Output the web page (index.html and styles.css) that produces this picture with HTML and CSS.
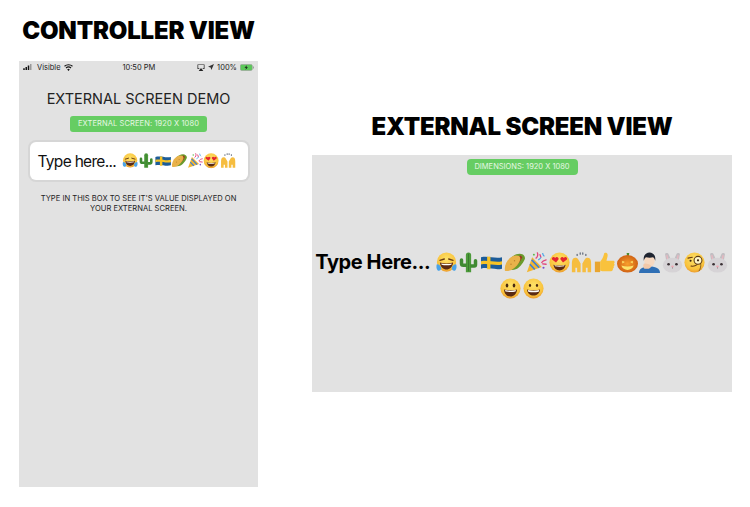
FILE: index.html
```html
<!DOCTYPE html>
<html lang="en">
<head>
<meta charset="utf-8">
<title>External screen demo</title>
<link rel="stylesheet" href="styles.css">
</head>
<body>
<svg class="defs" width="0" height="0" aria-hidden="true">
  <defs>
    <radialGradient id="face" cx="50%" cy="35%" r="70%"><stop offset="0" stop-color="#fde36a"/><stop offset=".7" stop-color="#f9c23c"/><stop offset="1" stop-color="#e8902a"/></radialGradient>
    <radialGradient id="pumpk" cx="50%" cy="50%" r="60%"><stop offset="0" stop-color="#f8a02c"/><stop offset="1" stop-color="#c8560f"/></radialGradient>
    <symbol id="joy" viewBox="0 0 24 24">
      <circle cx="12" cy="11.500" r="11" fill="url(#face)"/>
      <path d="M4.500 9.500 9.500 8M19.500 9.500 14.500 8" stroke="#6b3d12" stroke-width="1.500" fill="none" stroke-linecap="round"/>
      <path d="M4.500 12c4.500 1.500 10.500 1.500 15 0-.5 5.500-3.800 8-7.500 8S5 17.500 4.500 12z" fill="#5b2a12"/>
      <path d="M6 13c3.800 1 8.200 1 12 0l-.4 1.500c-3.300.8-7.900.8-11.200 0z" fill="#fff"/>
      <path d="M1 14c2.500 0 5 2 5 4.500S3.500 22 2 21 0 16 1 14zM23 14c-2.500 0-5 2-5 4.500s2.500 3.500 4 2.500 2-5 1-7z" fill="#4aa3e8"/>
    </symbol>
    <symbol id="cactus" viewBox="0 0 24 24">
      <path d="M9 23V3.500a3 3 0 0 1 6 0V23z" fill="#4c9a3a"/>
      <path d="M10 17H6A4 4 0 0 1 2 13V9a2 2 0 0 1 4 0v4h4zM14 14h4v-4a2 2 0 0 1 4 0v4.500A3.500 3.500 0 0 1 18.500 18H14z" fill="#3f8a32"/>
      <path d="M12 2v20" stroke="#2f6f28" stroke-width=".8"/>
    </symbol>
    <symbol id="sweden" viewBox="0 0 24 24">
      <path d="M0 6c8-2 16 2 24 0v13c-8 2-16-2-24 0z" fill="#1c5c99"/>
      <path d="M7 5.300h3.800v14.400H7z" fill="#f7c325"/>
      <path d="M0 10.500c8-2 16 2 24 0v3.800c-8 2-16-2-24 0z" fill="#f7c325"/>
    </symbol>
    <symbol id="taco" viewBox="0 0 24 24">
      <path d="M3 19C3 10 10 2 18 2c3 0 6 2 6 5 0 1-3 8-9 12-4 2-12 2-12 0z" fill="#6a9a2c"/>
      <path d="M7 14c2-5 7-9 12-10l2 2c-2 4-5 9-10 11z" fill="#9c3a1c"/>
      <path d="M1 21C0 13 6 5 13 4c4.500-.5 6 1.500 5.500 4.500-1 4.500-5.500 9.500-10 12-2.500 1-7 2-7.500.5z" fill="#e9b24a"/>
      <circle cx="8" cy="14" r=".8" fill="#b9802a"/><circle cx="12" cy="10" r=".8" fill="#b9802a"/>
    </symbol>
    <symbol id="party" viewBox="0 0 24 24">
      <path d="M1 23 7 6l11 11z" fill="#f2b632"/>
      <path d="M4.500 14 10 20M6.500 9 15 18" stroke="#3d7fd9" stroke-width="1.900"/>
      <path d="M13 1c1 2 0 5-1.500 6M23 9c-2 .5-4 1-5 3M16 3l1 3M23 14l-4-.5" stroke="#e2447a" stroke-width="1.500" fill="none" stroke-linecap="round"/>
      <path d="M19 1c0 2 1 3 2 4M14 9c2-1 3-2 3-3" stroke="#4aa3e8" stroke-width="1.300" fill="none"/>
      <circle cx="20" cy="18" r="1.200" fill="#7a4fc9"/><circle cx="9" cy="3" r="1.100" fill="#5bb84a"/>
    </symbol>
    <symbol id="heart" viewBox="0 0 24 24">
      <circle cx="12" cy="12" r="11.500" fill="url(#face)"/>
      <path d="M8 12 3.500 8.500C2.500 6.500 5.500 4.500 7 6.800 8.500 4.500 11.500 6 11 8.300zM16 12l4.500-3.500C21.500 6.500 18.500 4.500 17 6.800 15.500 4.500 12.500 6 13 8.300z" fill="#e4252f"/>
      <path d="M5 14.500c4.500 1.300 9.500 1.300 14 0-.7 4.300-3.500 6.500-7 6.500s-6.300-2.200-7-6.500z" fill="#5b2a12"/>
      <path d="M6.300 15c3.600.8 7.800.8 11.400 0l-.4 1.300c-3.200.6-7.400.6-10.600 0z" fill="#fff"/>
    </symbol>
    <symbol id="hands" viewBox="0 0 24 24">
      <path d="M1 23V14c0-2 0-5 1.500-6.500S7 6.500 8 8l3 5v10H7v-5H5v5zM23 23V14c0-2 0-5-1.500-6.500S17 6.500 16 8l-3 5v10h4v-5h2v5z" fill="#f6bd3f"/>
      <path d="M7 2.500v1.500M10.500 1v1.500M13.500 1v1.500M17 2.500v1.500" stroke="#4a5568" stroke-width="1.200" stroke-linecap="round"/>
    </symbol>
    <symbol id="thumb" viewBox="0 0 24 24">
      <path d="M1 11h6v12H1z" fill="#e9a52f"/>
      <path d="M7 11c2-2 4-6 4.500-9 .3-1.500 3.800-1.500 4.100 1 .2 2-.8 5-1.300 7H22c1.800 0 2 2.500.7 3 1.200.7 1 2.700-.4 3 .8 1 .4 2.500-.8 3 .4 1.200-.3 3-2 3H11c-2 0-3-1-4-1z" fill="#f9c23c"/>
    </symbol>
    <symbol id="pumpkin" viewBox="0 0 24 24">
      <path d="M11 1h3l-.5 4h-2z" fill="#4f8a2d"/>
      <ellipse cx="12" cy="13.500" rx="12" ry="10" fill="url(#pumpk)"/>
      <path d="M6 10l3 1.500L6 13zM18 10l-3 1.500 3 1.500zM5 15.500c4.500 1.500 9.500 1.500 14 0-1 3.500-4 5-7 5s-6-1.500-7-5z" fill="#fde36a"/>
    </symbol>
    <symbol id="man" viewBox="0 0 24 24">
      <path d="M0 24c0-5 4-7.500 12-7.500S24 19 24 24z" fill="#2f6fb5"/>
      <path d="M6 9c0-5 3-7.500 6-7.500S18 4 18 9c0 5-3 8-6 8s-6-3-6-8z" fill="#f6d8c0"/>
      <path d="M5.500 10C4.500 4 8 .5 12 .5S19.500 4 18.500 10c-.5-2-1.500-3.500-2.500-4-2 .7-5.500.7-8 0-1 .5-2 2-2.500 4z" fill="#1e2430"/>
      <path d="M6 13c2 0 6 .5 7.500 2.500 1 1.500-1 3.500-2.500 3.500H6.500C5 19 4 14 6 13z" fill="#f3c8a8"/>
    </symbol>
    <symbol id="rabbit" viewBox="0 0 24 24">
      <path d="M5 11 3.500 2.500c-.2-1.500 3.300-2.200 3.800-.5L10 8zM19 11l1.500-8.500c.2-1.500-3.300-2.200-3.800-.5L14 8z" fill="#c2bec2"/>
      <path d="M6.500 9 5.500 3.500M17.500 9l1-5.500" stroke="#eeb7c0" stroke-width="1.300"/>
      <ellipse cx="12" cy="15" rx="11" ry="8.500" fill="#d6d3d6"/>
      <circle cx="7.500" cy="14" r="1.500" fill="#3a3034"/><circle cx="16.500" cy="14" r="1.500" fill="#3a3034"/>
      <path d="M12 16.500v2.500" stroke="#9b8f94"/><ellipse cx="12" cy="16.500" rx="1.500" ry="1" fill="#eea6b2"/>
    </symbol>
    <symbol id="monocle" viewBox="0 0 24 24">
      <circle cx="12" cy="12" r="11.500" fill="url(#face)"/>
      <circle cx="16" cy="9.500" r="4.500" fill="#fff6c8" stroke="#5b3a14" stroke-width="1.200"/>
      <circle cx="16" cy="9.500" r="1.300" fill="#3a2410"/>
      <circle cx="7.500" cy="10" r="1.200" fill="#3a2410"/>
      <path d="M4.500 7 9.500 6M8 16c2.500.5 5 0 7-1.500" stroke="#6b3d12" stroke-width="1.200" fill="none" stroke-linecap="round"/>
      <path d="M19 13c.5 3 0 6-2 9" stroke="#5b3a14" stroke-width=".8" fill="none"/>
    </symbol>
    <symbol id="smile" viewBox="0 0 24 24">
      <circle cx="12" cy="12" r="11.500" fill="url(#face)"/>
      <ellipse cx="8" cy="8.500" rx="1.500" ry="2.300" fill="#4a2a10"/><ellipse cx="16" cy="8.500" rx="1.500" ry="2.300" fill="#4a2a10"/>
      <path d="M4.500 13c5 1.300 10 1.300 15 0-.5 5.500-3.800 8-7.500 8S5 18.500 4.500 13z" fill="#5b2a12"/>
      <path d="M5.800 13.800c4 1 8.400 1 12.400 0l-.4 1.700c-3.500.8-8.100.8-11.600 0z" fill="#fff"/>
    </symbol>
    <symbol id="grin" viewBox="0 0 24 24">
      <circle cx="12" cy="12" r="11.500" fill="url(#face)"/>
      <ellipse cx="8" cy="8.500" rx="1.300" ry="1.700" fill="#4a2a10"/><ellipse cx="16" cy="8.500" rx="1.300" ry="1.700" fill="#4a2a10"/>
      <path d="M4.500 13c5 1.300 10 1.300 15 0-.5 4.500-3.800 7-7.500 7S5 17.500 4.500 13z" fill="#5b2a12"/>
      <path d="M5.500 13.800c4 1 9 1 13 0l-.5 2c-3.700.8-8.300.8-12 0z" fill="#fff"/>
    </symbol>
  </defs>
</svg>
<main class="page">
  <section class="controller">
    <h1 class="view-title">CONTROLLER VIEW</h1>
    <div class="phone">
      <div class="status">
        <div class="status-side">
          <svg class="signal" viewBox="0 0 14 8"><path d="M0 5.500h2V8H0zM3 4h2v4H3zM6 2h2v6H6z" fill="#111"/><path d="M9 0h2v8H9z" fill="#999"/></svg>
          <span>Visible</span>
          <svg class="wifi" viewBox="0 0 12 9"><path d="M6 9 4.300 7a2.500 2.500 0 0 1 3.400 0zM3.200 5.800a4 4 0 0 1 5.600 0l1-1.200a5.800 5.800 0 0 0-7.600 0zM1.200 3.500a7 7 0 0 1 9.600 0l1-1.200a8.500 8.500 0 0 0-11.600 0z" fill="#111"/></svg>
        </div>
        <span class="status-time">10:50 PM</span>
        <div class="status-side status-right">
          <svg class="airplay" viewBox="0 0 10 9"><path d="M.5.500h9v6h-2l-.6-.9h1.700V1.400H1.400v4.200h1.700l-.6.900h-2z" fill="#222"/><path d="M5 5 8 9H2z" fill="#222"/></svg>
          <svg class="loc" viewBox="0 0 8 8"><path d="M8 0 0 3.500l3.500 1L4.500 8z" fill="#333"/></svg>
          <span>100%</span>
          <svg class="battery" viewBox="0 0 15 7"><rect x=".3" y=".3" width="12.900" height="6.400" rx="1.500" fill="#5cc85a" stroke="#999" stroke-width=".6"/><path d="M14 2.300h1v2.400h-1z" fill="#999"/><path d="M7.500 1 4.800 3.800h1.800L5.800 6l2.700-2.800H6.700z" fill="#111"/></svg>
        </div>
      </div>
      <h2 class="demo-title">EXTERNAL SCREEN DEMO</h2>
      <div class="badge badge-wide">EXTERNAL SCREEN: 1920 X 1080</div>
      <div class="input-box">
        <span class="input-text">Type here...</span>
        <span class="input-emoji">
          <svg class="em"><use href="#joy"/></svg><svg class="em"><use href="#cactus"/></svg><svg class="em"><use href="#sweden"/></svg><svg class="em"><use href="#taco"/></svg><svg class="em"><use href="#party"/></svg><svg class="em"><use href="#heart"/></svg><svg class="em"><use href="#hands"/></svg>
        </span>
      </div>
      <p class="hint">TYPE IN THIS BOX TO SEE IT'S VALUE DISPLAYED ON YOUR EXTERNAL SCREEN.</p>
    </div>
  </section>
  <section class="external">
    <h1 class="view-title">EXTERNAL SCREEN VIEW</h1>
    <div class="screen">
      <div class="badge badge-small">DIMENSIONS: 1920 X 1080</div>
      <p class="output"><span class="output-text">Type Here...</span> <svg class="eb"><use href="#joy"/></svg><svg class="eb"><use href="#cactus"/></svg><svg class="eb"><use href="#sweden"/></svg><svg class="eb"><use href="#taco"/></svg><svg class="eb"><use href="#party"/></svg><svg class="eb"><use href="#heart"/></svg><svg class="eb"><use href="#hands"/></svg><svg class="eb"><use href="#thumb"/></svg><svg class="eb"><use href="#pumpkin"/></svg><svg class="eb"><use href="#man"/></svg><svg class="eb"><use href="#rabbit"/></svg><svg class="eb"><use href="#monocle"/></svg><svg class="eb"><use href="#rabbit"/></svg><svg class="eb"><use href="#smile"/></svg><svg class="eb"><use href="#grin"/></svg></p>
    </div>
  </section>
</main>
</body>
</html>
```
FILE: styles.css
```css
* { box-sizing: border-box; }
html, body { margin: 0; height: 100%; background: #fff; overflow: hidden; }
body { font-family: "Inter", "Liberation Sans", sans-serif; color: #000; }
.defs { position: absolute; }
.page { display: flex; align-items: flex-start; padding-left: 19px; gap: 54px; }
.view-title { margin: 0; font-size: 24px; line-height: 29px; font-weight: 900; text-align: center; white-space: nowrap; letter-spacing: -.2px; }
.controller { width: 239px; padding-top: 16px; display: flex; flex-direction: column; }
.controller .view-title { height: 45px; }
.phone { height: 426px; background: #e2e2e2; display: flex; flex-direction: column; align-items: center; }
.status { width: 100%; height: 12px; padding: 0 4px; display: flex; justify-content: space-between; align-items: center; font-size: 7.500px; color: #222; }
.status-side { display: flex; align-items: center; gap: 3px; }
.status-time { font-size: 7.500px; margin-left: 8px; }
.signal { width: 11px; height: 6px; }
.wifi { width: 9px; height: 7px; }
.airplay { width: 8px; height: 7px; }
.loc { width: 6px; height: 6px; }
.battery { width: 14px; height: 7px; }
.demo-title { margin: 17px 0 0; font-size: 14.500px; line-height: 18px; font-weight: 400; color: #222; white-space: nowrap; }
.badge { background: #66cd63; color: #e6f7e4; text-align: center; white-space: nowrap; }
.badge-wide { margin-top: 8px; width: 137px; height: 16px; line-height: 16px; border-radius: 3px; font-size: 7.500px; letter-spacing: .1px; }
.input-box { margin-top: 10px; width: 218px; height: 38px; background: #fff; border-radius: 6px; box-shadow: 0 0 0 2px #d6d6d6; padding-left: 9px; display: flex; align-items: center; overflow: hidden; white-space: nowrap; }
.input-text { font-size: 15.500px; letter-spacing: -.7px; color: #111; margin-left: -1px; margin-right: 6px; }
.input-emoji { display: flex; align-items: center; flex: none; }
.em { width: 16.300px; height: 15.500px; flex: none; }
.hint { margin: 14px 0 0; width: 215px; font-size: 7.600px; line-height: 9.500px; text-align: center; color: #222; }
.external { width: 420px; padding-top: 112px; display: flex; flex-direction: column; }
.external .view-title { height: 43px; }
.screen { height: 237px; background: #e2e2e2; display: flex; flex-direction: column; align-items: center; padding-top: 4px; }
.badge-small { width: 111px; height: 16px; line-height: 16px; border-radius: 4px; font-size: 7.500px; }
.output { margin: 74px 0 0; width: 100%; text-align: center; line-height: 26px; font-size: 20px; font-weight: 700; }
.output-text { letter-spacing: -.4px; }
.eb { width: 21px; height: 21px; margin: 0 .8px; vertical-align: -4px; }
```
